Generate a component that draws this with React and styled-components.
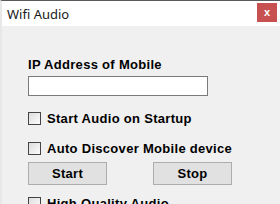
import React from 'react';
import styled, { createGlobalStyle } from 'styled-components';

const GlobalStyle = createGlobalStyle`
  html, body {
    margin: 0;
    padding: 0;
    background: #f0f0f0;
  }
`
const Window = styled.div`
  width: 280px;
  height: 204px;
  overflow: hidden;
  box-sizing: border-box;
  border-top: 1px solid #5a5a5a;
  border-left: 2px solid #e8e8e8;
  background: #f0f0f0;
  display: flex;
  flex-direction: column;
`
const TitleBar = styled.div`
  height: 25px;
  flex-shrink: 0;
  background: #ffffff;
  display: flex;
  align-items: center;
  justify-content: space-between;
  padding-left: 5px;
  padding-right: 3px;
  font-family: "Noto Sans", sans-serif;
  font-size: 13px;
  color: #1a1a1a;
`
const Close = styled.div`
  width: 20px;
  height: 19px;
  margin-bottom: 3px;
  background: #c75050;
  color: #fff;
  font-family: "Liberation Sans", Arial, sans-serif;
  font-weight: bold;
  font-size: 11px;
  display: flex;
  align-items: center;
  justify-content: center;
`
const Content = styled.div`
  flex: 1;
  padding: 31px 0 0 26px;
  display: flex;
  flex-direction: column;
  align-items: flex-start;
  font-family: "Liberation Sans", Arial, sans-serif;
  font-weight: bold;
  font-size: 13px;
  letter-spacing: 0.3px;
  line-height: 15px;
  color: #000;
`
const Label = styled.div`
  height: 15px;
`
const TextBox = styled.div`
  margin-top: 4px;
  width: 180px;
  height: 20px;
  box-sizing: border-box;
  background: #fff;
  border: 1px solid #7a7a7a;
`
const CheckRow = styled.label`
  display: flex;
  align-items: center;
  gap: 6px;
  height: 15px;
  margin-top: ${p => p.$top}px;
  white-space: nowrap;
`
const Box = styled.span`
  width: 13px;
  height: 13px;
  box-sizing: border-box;
  border: 1px solid #444;
  background: linear-gradient(135deg, #dcdcdc, #fdfdfd);
  flex-shrink: 0;
`
const Buttons = styled.div`
  margin-top: 6px;
  display: flex;
  gap: 46px;
`
const Button = styled.button`
  width: 79px;
  height: 23px;
  box-sizing: border-box;
  background: #e1e1e1;
  border: 1px solid #adadad;
  font: inherit;
  letter-spacing: inherit;
  color: #000;
  padding: 0;
`

export default function App() {
    return (
        <Window>
            <GlobalStyle />
            <TitleBar>
                <span>Wifi Audio</span>
                <Close>x</Close>
            </TitleBar>
            <Content>
                <Label>IP Address of Mobile</Label>
                <TextBox />
                <CheckRow $top={15}><Box />Start Audio on Startup</CheckRow>
                <CheckRow $top={15}><Box />Auto Discover Mobile device</CheckRow>
                <Buttons>
                    <Button>Start</Button>
                    <Button>Stop</Button>
                </Buttons>
                <CheckRow $top={11}><Box />High Quality Audio</CheckRow>
            </Content>
        </Window>
    )
}
